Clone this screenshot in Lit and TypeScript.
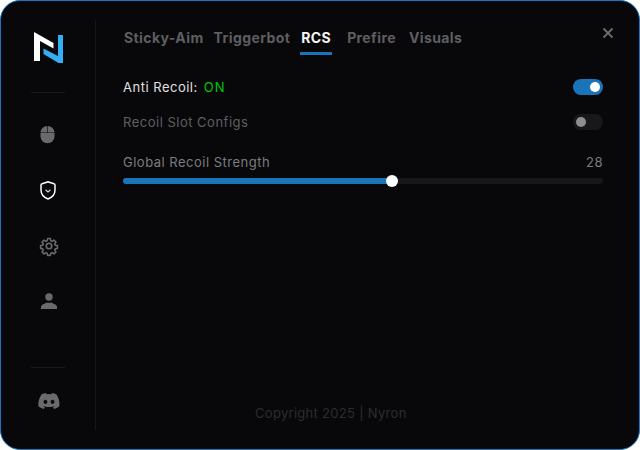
import { html, css, LitElement } from 'lit';
import { customElement } from 'lit/decorators.js';
import { classMap } from 'lit/directives/class-map.js';

const TABS = ['Sticky-Aim', 'Triggerbot', 'RCS', 'Prefire', 'Visuals'];

@customElement('app-root')
export class AppRoot extends LitElement {
  static styles = css`
    :host {
      display: block;
      width: 640px;
      height: 450px;
      font-family: Inter, "Liberation Sans", sans-serif;
    }

    .window {
      box-sizing: border-box;
      width: 640px;
      height: 450px;
      padding: 19px 0 19px 0;
      display: flex;
      position: relative;
      background: #08080b;
      border: 1px solid #1a74ba;
      border-radius: 20px;
      overflow: hidden;
    }

    .sidebar {
      box-sizing: border-box;
      width: 95px;
      height: 410px;
      flex: none;
      padding-left: 29px;
      padding-right: 30px;
      border-right: 1px solid #1c1417;
      display: flex;
      flex-direction: column;
      align-items: center;
    }

    .logo {
      margin-top: 12px;
      margin-left: 2px;
      width: 30px;
      height: 32px;
    }

    .rule {
      width: 34px;
      height: 1px;
      flex: none;
      background: #21171a;
    }

    .rule.top {
      margin-top: 28px;
    }

    .rule.bottom {
      margin-top: auto;
    }

    .nav {
      margin-top: 30px;
      display: flex;
      flex-direction: column;
      align-items: center;
      gap: 34px;
    }

    .nav svg {
      display: block;
      width: 22px;
      height: 22px;
    }

    .nav svg.gear {
      margin-left: 2px;
    }

    .nav svg.user {
      margin-top: -1px;
      margin-left: 2px;
    }

    .discord {
      margin-top: 25px;
      margin-bottom: 21px;
      margin-left: 2px;
      width: 22px;
      height: 16px;
    }

    .main {
      flex: 1;
      padding: 0 36px 0 27px;
      display: flex;
      flex-direction: column;
    }

    .tabs {
      display: flex;
      gap: 10px;
      height: 34px;
      padding-top: 9px;
      box-sizing: border-box;
      margin-left: 1px;
    }

    .tab {
      font-size: 14px;
      line-height: 18px;
      font-weight: 700;
      color: #5e5e60;
      height: 18px;
      letter-spacing: 0.4px;
    }

    .tab.active {
      color: #f5f5f5;
      border-bottom: 3px solid #1a74ba;
      padding: 0 1px 5px;
      margin-right: 5px;
    }

    .tab.prefire {
      margin-right: 3px;
    }

    .close {
      position: absolute;
      top: 26px;
      right: 25px;
      width: 12px;
      height: 12px;
    }

    .row {
      display: flex;
      align-items: center;
      justify-content: space-between;
      font-size: 13px;
      line-height: 16px;
      height: 16px;
      letter-spacing: 0.5px;
    }

    .row.first {
      margin-top: 25px;
      color: #e0e0e0;
    }

    .row.second {
      margin-top: 19px;
      color: #5f5f61;
    }

    .row.third {
      margin-top: 24px;
      color: #7c7c7f;
    }

    .on {
      color: #00c800;
      margin-left: 6px;
      letter-spacing: 1px;
    }

    .toggle {
      box-sizing: border-box;
      width: 30px;
      height: 16px;
      border-radius: 8px;
      padding: 3px;
      display: flex;
      background: #18181a;
    }

    .toggle.checked {
      background: #1a74ba;
      justify-content: flex-end;
    }

    .knob {
      width: 10px;
      height: 10px;
      border-radius: 50%;
      background: #8e8e90;
    }

    .toggle.checked .knob {
      background: #ffffff;
    }

    .track {
      margin-top: 8px;
      height: 6px;
      border-radius: 3px;
      background: #17171a;
      display: flex;
      align-items: center;
    }

    .fill {
      height: 6px;
      border-radius: 3px 0 0 3px;
      background: #1a74ba;
    }

    .thumb {
      width: 12px;
      height: 12px;
      margin-left: -6px;
      border-radius: 50%;
      background: #ffffff;
      flex: none;
    }

    .copyright {
      margin-top: auto;
      margin-bottom: 9px;
      margin-left: 132px;
      color: #2c2c2e;
      font-size: 13px;
      line-height: 16px;
      letter-spacing: 0.3px;
    }
  `;

  render() {
    return html`
      <div class="window">
        <aside class="sidebar">
          <svg class="logo" viewBox="0 0 30 32">
            <path d="M0 0 L19.500 11 V16.500 L6 9 V29 H0 Z" fill="#ffffff" />
            <path d="M9.500 16.500 L24 24 V3 H29 V31 H24.500 L9.500 22 Z" fill="#36aef5" />
          </svg>
          <div class="rule top"></div>
          <nav class="nav">
            <svg viewBox="0 0 22 22">
              <path d="M3.500 9.500 a6.700 6.500 0 0 1 6.700 -6.500 v6.500 Z M10.800 3 a6.700 6.500 0 0 1 6.700 6.500 h-6.700 Z" fill="#6a6a6c" />
              <path d="M3.500 10.100 h14 v3.400 a7 6.800 0 0 1 -14 0 Z" fill="#6a6a6c" />
            </svg>
            <svg viewBox="0 0 22 22">
              <path d="M9.800 3.200 L11 2.800 L12.200 3.200 L17 4.800 C17.700 5 18 5.500 18 6.200 V11 C18 15.500 15 18.500 11 20 C7 18.500 4 15.500 4 11 V6.200 C4 5.500 4.300 5 5 4.800 Z" fill="none" stroke="#ffffff" stroke-width="1.500" stroke-linejoin="round" />
              <path d="M8.800 11 L11 13 L13.200 11" fill="none" stroke="#d8d8d8" stroke-width="1.100" stroke-linecap="round" stroke-linejoin="round" />
            </svg>
            <svg class="gear" viewBox="0 0 24 24">
              <path d="M10.300 3 h3.400 l.5 2.600 1.600.7 2.200-1.500 2.400 2.400-1.500 2.200.7 1.600 2.600.5 v3.400 l-2.600.5-.7 1.600 1.500 2.200-2.400 2.400-2.200-1.500-1.600.7-.5 2.600 h-3.400 l-.5-2.600-1.600-.7-2.200 1.500-2.400-2.400 1.500-2.200-.7-1.600-2.600-.5 v-3.400 l2.600-.5.7-1.600-1.500-2.200 2.400-2.400 2.200 1.500 1.600-.7 Z" transform="translate(1.200 1.200) scale(.9)" fill="none" stroke="#6a6a6c" stroke-width="1.900" stroke-linejoin="round" />
              <circle cx="12" cy="12" r="3" fill="none" stroke="#6a6a6c" stroke-width="1.800" />
            </svg>
            <svg class="user" viewBox="0 0 22 22">
              <circle cx="11" cy="7" r="3.700" fill="#6a6a6c" />
              <path d="M3 19 V17 C3 15.500 4.500 14.500 6.500 13.800 L8 12.700 H14 L15.500 13.800 C17.500 14.500 19 15.500 19 17 V19 Z" fill="#6a6a6c" />
            </svg>
          </nav>
          <div class="rule bottom"></div>
          <svg class="discord" viewBox="0 0 24 18">
            <path fill="#6a6a6c" d="M20.300 1.500A19.800 19.800 0 0 0 15.400 0c-.2.4-.5.9-.6 1.300a18.400 18.400 0 0 0-5.500 0C9.100.9 8.800.4 8.600 0 6.900.3 5.200.8 3.700 1.500.6 6.100-.3 10.600.1 15c2 1.500 4 2.400 6 3 .5-.7.9-1.400 1.300-2.100-.7-.3-1.400-.6-2-1l.5-.4c3.900 1.800 8.100 1.800 12 0l.5.4c-.6.400-1.300.700-2 1 .4.700.8 1.400 1.300 2.100 2-.6 4-1.500 6-3 .5-5.100-.8-9.600-3.400-13.500ZM8 12.300c-1.200 0-2.200-1.100-2.200-2.400S6.800 7.500 8 7.500s2.200 1.100 2.200 2.400-1 2.400-2.200 2.400Zm8 0c-1.200 0-2.200-1.100-2.200-2.400s1-2.400 2.200-2.400 2.200 1.100 2.200 2.400-1 2.400-2.200 2.400Z" />
          </svg>
        </aside>
        <main class="main">
          <div class="tabs">
            ${TABS.map(
              (t) => html`<div class=${classMap({ tab: true, active: t === 'RCS', prefire: t === 'Prefire' })}>${t}</div>`
            )}
          </div>
          <div class="row first">
            <span>Anti Recoil:<span class="on">ON</span></span>
            <div class="toggle checked"><div class="knob"></div></div>
          </div>
          <div class="row second">
            <span>Recoil Slot Configs</span>
            <div class="toggle"><div class="knob"></div></div>
          </div>
          <div class="row third">
            <span>Global Recoil Strength</span>
            <span>28</span>
          </div>
          <div class="track">
            <div class="fill" style="width: ${(28 / 50) * 100}%"></div>
            <div class="thumb"></div>
          </div>
          <div class="copyright">Copyright 2025 | Nyron</div>
        </main>
        <svg class="close" viewBox="0 0 12 12">
          <path d="M1.500 1.500 L10.500 10.500 M10.500 1.500 L1.500 10.500" stroke="#6c6c6e" stroke-width="1.800" fill="none" />
        </svg>
      </div>
    `;
  }
}
